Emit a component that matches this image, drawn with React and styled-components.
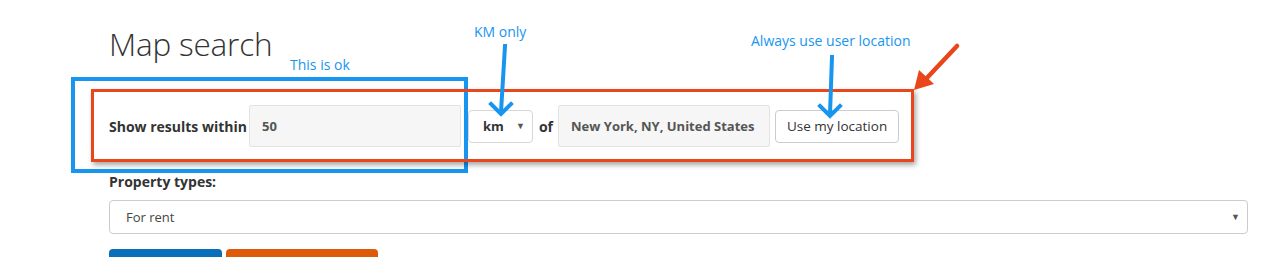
import React from "react";
import styled, { createGlobalStyle } from "styled-components";

const GlobalStyle = createGlobalStyle`
  html, body {
    margin: 0;
    padding: 0;
    background: #fff;
  }
  body {
    font-family: "Open Sans", "Noto Sans", sans-serif;
    font-size: 13px;
    color: #333;
  }
`;

const ANNOT_BLUE = "#1795ef";
const ANNOT_RED = "#ea461b";

const Page = styled.div`
  position: relative;
  width: 1285px;
  height: 257px;
  overflow: hidden;
`;

const Container = styled.div`
  padding: 24px 37px 0 109px;
`;

const Title = styled.h1`
  margin: 0;
  font-size: 31.5px;
  font-weight: 300;
  line-height: 40px;
  color: #333;
  letter-spacing: -0.2px;
`;

const SearchRow = styled.div`
  display: flex;
  align-items: center;
  margin-top: 41px;
  height: 42px;
`;

const InlineLabel = styled.span`
  font-weight: 700;
  font-size: 14px;
  color: #333;
  margin-right: ${(p) => p.$gap || 0}px;
  margin-left: ${(p) => p.$before || 0}px;
`;

const TextBox = styled.div`
  box-sizing: border-box;
  width: 212px;
  height: 42px;
  display: flex;
  align-items: center;
  padding-left: 12px;
  background: #f6f6f6;
  border: 1px solid #e3e3e3;
  border-radius: 2px;
  font-weight: 700;
  color: #555;
`;

const UnitSelect = styled.div`
  box-sizing: border-box;
  width: 65px;
  height: 33px;
  margin-left: 7px;
  display: flex;
  align-items: center;
  justify-content: space-between;
  padding: 0 7px 0 14px;
  border: 1px solid #d6d6d6;
  border-radius: 4px;
  font-weight: 700;
  color: #333;
`;

const Caret = styled.span`
  font-size: 9px;
  color: #555;
  margin-top: -2px;
`;

const PlainButton = styled.button`
  box-sizing: border-box;
  height: 33px;
  width: 124px;
  margin-left: 5px;
  font-family: inherit;
  font-size: 13.5px;
  color: #333;
  background: #fff;
  border: 1px solid #ccc;
  border-radius: 4px;
  padding: 0;
`;

const FieldLabel = styled.div`
  margin-top: 26px;
  font-weight: 700;
  font-size: 14px;
  line-height: 18px;
`;

const WideSelect = styled.div`
  box-sizing: border-box;
  margin-top: 9px;
  height: 34px;
  display: flex;
  align-items: center;
  justify-content: space-between;
  padding: 0 7px 0 16px;
  border: 1px solid #ccc;
  border-radius: 4px;
  color: #444;
`;

const ButtonRow = styled.div`
  display: flex;
  gap: 4px;
  margin-top: 15px;
`;

const ActionButton = styled.div`
  width: ${(p) => p.$w}px;
  height: 34px;
  background: ${(p) => p.$bg};
  border-radius: 4px;
`;

const AnnotText = styled.div`
  position: absolute;
  left: ${(p) => p.$x}px;
  top: ${(p) => p.$y}px;
  color: ${ANNOT_BLUE};
  font-size: 14px;
  line-height: 16px;
  white-space: nowrap;
`;

const Frame = styled.div`
  position: absolute;
  box-sizing: border-box;
  left: ${(p) => p.$x}px;
  top: ${(p) => p.$y}px;
  width: ${(p) => p.$w}px;
  height: ${(p) => p.$h}px;
  border: ${(p) => p.$bw}px solid ${(p) => p.$color};
  box-shadow: ${(p) => (p.$shadow ? "2px 3px 5px rgba(0,0,0,0.35)" : "none")};
  pointer-events: none;
`;

const ArrowLayer = styled.svg`
  position: absolute;
  left: 0;
  top: 0;
  pointer-events: none;
`;

export default function App() {
  return (
    <Page>
      <GlobalStyle />
      <Container>
        <Title>Map search</Title>

        <SearchRow>
          <InlineLabel $gap={2}>Show results within</InlineLabel>
          <TextBox>50</TextBox>
          <UnitSelect>
            km <Caret>▼</Caret>
          </UnitSelect>
          <InlineLabel $before={6} $gap={5}>of</InlineLabel>
          <TextBox>New York, NY, United States</TextBox>
          <PlainButton>Use my location</PlainButton>
        </SearchRow>

        <FieldLabel>Property types:</FieldLabel>
        <WideSelect>
          For rent <Caret>▼</Caret>
        </WideSelect>

        <ButtonRow>
          <ActionButton $w={113} $bg="#0a6fb8" />
          <ActionButton $w={152} $bg="#dd5a0b" />
        </ButtonRow>
      </Container>

      {/* annotations drawn over the screenshot */}
      <Frame $x={71} $y={77} $w={397} $h={96} $bw={4} $color={ANNOT_BLUE} />
      <Frame $x={91} $y={89} $w={823} $h={73} $bw={3} $color={ANNOT_RED} $shadow />

      <AnnotText $x={290} $y={57}>This is ok</AnnotText>
      <AnnotText $x={474} $y={24}>KM only</AnnotText>
      <AnnotText $x={751} $y={33}>Always use user location</AnnotText>

      <ArrowLayer width="1285" height="257">
        <g stroke={ANNOT_BLUE} strokeWidth="4" fill="none" strokeLinecap="square">
          <path d="M505 46 L501 112" />
          <path d="M491 104 L501 114 L511 104" />
          <path d="M832 57 L830 114" />
          <path d="M820 106 L830 116 L840 106" />
        </g>
        <g stroke={ANNOT_RED} strokeWidth="4.5" fill="none" strokeLinecap="round">
          <path d="M957 46 L925 80" />
        </g>
        <path d="M914 90 L919 70 L934 84 Z" fill={ANNOT_RED} />
      </ArrowLayer>
    </Page>
  );
}
